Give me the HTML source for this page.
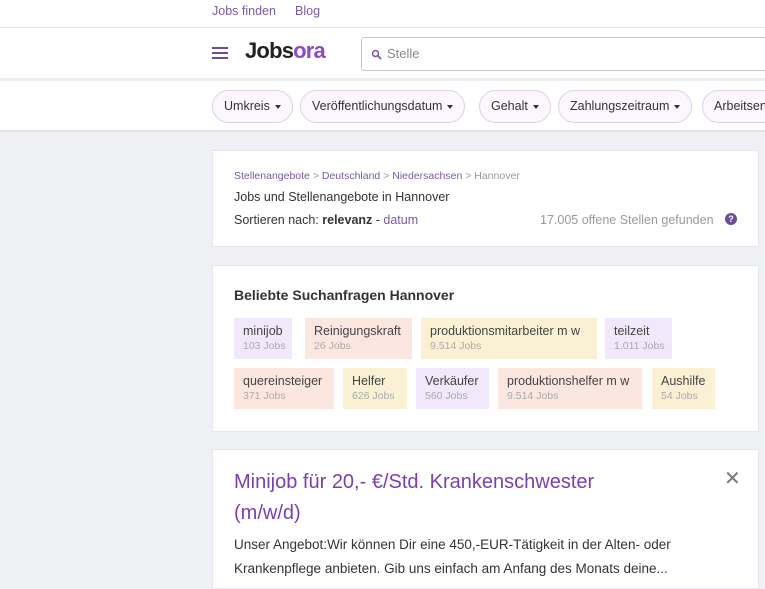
<!DOCTYPE html>
<html><head><meta charset="utf-8"><style>
*{margin:0;padding:0;box-sizing:border-box}
body{width:765px;height:574px;overflow:hidden;background:#eef0f4;font-family:"Liberation Sans",sans-serif;position:relative;color:#333}
.a{position:absolute}
.top{left:0;top:0;width:765px;height:28px;background:#fff;border-bottom:1px solid #e4e4ea}
.top span{position:absolute;top:4px;font-size:12.5px;color:#7a5aa8}
.hdr{left:0;top:28px;width:765px;height:52px;background:#fff;border-bottom:2px solid #ebebf0}
.flt{left:0;top:81px;width:765px;height:51px;background:#fff;border-bottom:2px solid #e2e2e8}
.pill{position:absolute;top:9px;height:33px;border:1px solid #ddd0e8;border-radius:17px;background:#fbf7fc;font-size:12.5px;color:#333;line-height:31px;padding:0 11px;white-space:nowrap}
.pill:after{content:"";display:inline-block;margin-left:5px;vertical-align:middle;border-left:3.5px solid transparent;border-right:3.5px solid transparent;border-top:4px solid #333}
.card{background:#fff;left:212px;width:547px;border:1px solid #e6e6ec}
.chip{position:absolute;height:41px;padding:5px 9px;font-size:12.5px;color:#444;line-height:16px;white-space:nowrap}
.chip small{display:block;font-size:10.5px;color:#aaa;line-height:14px}
.p{background:#f1e8fb}.o{background:#fce7e0}.y{background:#faf1d4}
</style></head><body>
<div class="a top"><span style="left:212px">Jobs finden</span><span style="left:295px">Blog</span></div>
<div class="a hdr">
 <div class="a" style="left:212px;top:19px;width:16px;height:2px;background:#6b4e96;box-shadow:0 5px 0 #6b4e96,0 10px 0 #6b4e96"></div>
 <div class="a" style="left:245px;top:10px;font-size:22px;font-weight:bold;color:#222;letter-spacing:-0.8px">Jobs<span style="color:#8a4cc0">ora</span></div>
 <div class="a" style="left:361px;top:9px;width:410px;height:34px;border:1px solid #c8c8cc;border-radius:3px">
  <svg class="a" style="left:9px;top:11px" width="11" height="11" viewBox="0 0 11 11"><circle cx="4.5" cy="4.5" r="3" fill="none" stroke="#7a5aa8" stroke-width="1.6"/><path d="M7 7l3 3" stroke="#7a5aa8" stroke-width="1.8"/></svg>
  <span class="a" style="left:25px;top:8px;font-size:13px;color:#888">Stelle</span></div>
</div>
<div class="a flt">
 <div class="pill" style="left:212px">Umkreis</div>
 <div class="pill" style="left:300px">Veröffentlichungsdatum</div>
 <div class="pill" style="left:479px">Gehalt</div>
 <div class="pill" style="left:558px">Zahlungszeitraum</div>
 <div class="pill" style="left:702px">Arbeitsentgelt</div>
</div>
<div class="a card" style="top:150px;height:97px">
 <div class="a" style="left:21px;top:19px;font-size:10.5px;color:#7a5aa8">Stellenangebote <span style="color:#999">&gt;</span> Deutschland <span style="color:#999">&gt;</span> Niedersachsen <span style="color:#999">&gt; Hannover</span></div>
 <div class="a" style="left:21px;top:39px;font-size:12.5px;color:#333">Jobs und Stellenangebote in Hannover</div>
 <div class="a" style="left:21px;top:62px;font-size:12.5px;color:#333">Sortieren nach: <b>relevanz</b> - <span style="color:#7a5aa8">datum</span></div>
 <div class="a" style="left:327px;top:62px;font-size:12.5px;color:#999">17.005 offene Stellen gefunden</div>
 <div class="a" style="left:512px;top:62px;width:12px;height:12px;border-radius:50%;background:#6b4e96;color:#fff;font-size:9px;font-weight:bold;text-align:center;line-height:12px">?</div>
</div>
<div class="a card" style="top:265px;height:167px">
 <div class="a" style="left:21px;top:21px;font-size:14px;font-weight:bold;color:#333">Beliebte Suchanfragen Hannover</div>
</div>
<div class="chip p a" style="left:234px;top:318px;width:58px">minijob<small>103 Jobs</small></div>
<div class="chip o a" style="left:305px;top:318px;width:107px">Reinigungskraft<small>26 Jobs</small></div>
<div class="chip y a" style="left:421px;top:318px;width:176px">produktionsmitarbeiter m w<small>9.514 Jobs</small></div>
<div class="chip p a" style="left:605px;top:318px;width:67px">teilzeit<small>1.011 Jobs</small></div>
<div class="chip o a" style="left:234px;top:368px;width:100px">quereinsteiger<small>371 Jobs</small></div>
<div class="chip y a" style="left:343px;top:368px;width:64px">Helfer<small>626 Jobs</small></div>
<div class="chip p a" style="left:416px;top:368px;width:73px">Verkäufer<small>560 Jobs</small></div>
<div class="chip o a" style="left:498px;top:368px;width:144px">produktionshelfer m w<small>9.514 Jobs</small></div>
<div class="chip y a" style="left:652px;top:368px;width:63px">Aushilfe<small>54 Jobs</small></div>
<div class="a card" style="top:449px;height:140px">
 <div class="a" style="left:21px;top:17px;font-size:20px;line-height:31px;color:#7a3fb0;width:420px">Minijob für 20,- €/Std. Krankenschwester (m/w/d)</div>
 <div class="a" style="left:511px;top:16px;font-size:20px;color:#777">✕</div>
 <div class="a" style="left:21px;top:83px;font-size:13.5px;line-height:24px;color:#333;width:500px">Unser Angebot:Wir können Dir eine 450,-EUR-Tätigkeit in der Alten- oder Krankenpflege anbieten. Gib uns einfach am Anfang des Monats deine...</div>
</div>
</body></html>
